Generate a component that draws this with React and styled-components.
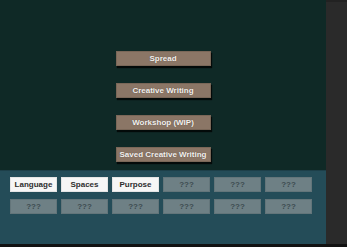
import React from "react";
import styled, { createGlobalStyle } from "styled-components";

const Global = createGlobalStyle`
  html, body { margin: 0; padding: 0; background: #111; }
  body { font-family: "Liberation Sans", Arial, sans-serif; }
`;

const Screen = styled.div`
  width: 347px;
  height: 247px;
  display: flex;
  flex-direction: column;
  overflow: hidden;
  background: #121212;
`;

const Body = styled.div`
  display: flex;
  height: 244px;
`;

const Main = styled.div`
  width: 326px;
  display: flex;
  flex-direction: column;
`;

const Sidebar = styled.div`
  flex: 1;
  background: #2a2a2a;
  border-top: 2px solid #222;
`;

const Stage = styled.div`
  height: 170px;
  box-sizing: border-box;
  background: #0f2926;
  display: flex;
  flex-direction: column;
  align-items: center;
  padding-top: 51px;
  gap: 17px;
`;

const MenuButton = styled.div`
  width: 95px;
  height: 15px;
  box-sizing: border-box;
  background: #8b7666;
  border: 1px solid #7a6758;
  box-shadow: 1px 2px 1px rgba(0, 0, 0, 0.75);
  color: #f4f1ee;
  font-size: 8px;
  font-weight: bold;
  display: flex;
  align-items: center;
  justify-content: center;
  text-shadow: 0 0 1px rgba(0, 0, 0, 0.4);
`;

const Panel = styled.div`
  flex: 1;
  background: #244c58;
  border-top: 1px solid #1d3f49;
  padding: 6px 10px 0;
  display: grid;
  grid-template-columns: repeat(6, 47px);
  grid-auto-rows: 15px;
  column-gap: 4px;
  row-gap: 7px;
  align-content: start;
`;

const Tag = styled.div`
  box-sizing: border-box;
  background: ${(p) => (p.$unlocked ? "#f6f6f6" : "#6e8085")};
  border: 1px solid ${(p) => (p.$unlocked ? "#e4e4e4" : "#63757a")};
  color: ${(p) => (p.$unlocked ? "#2e2e2e" : "#3c4b50")};
  font-size: 8px;
  font-weight: bold;
  display: flex;
  align-items: center;
  justify-content: center;
`;

const Footer = styled.div`
  height: 3px;
  background: #121212;
`;

const menu = ["Spread", "Creative Writing", "Workshop (WIP)", "Saved Creative Writing"];
const tags = ["Language", "Spaces", "Purpose", "???", "???", "???", "???", "???", "???", "???", "???", "???"];

export default function App() {
  return (
    <>
      <Global />
      <Screen>
        <Body>
          <Main>
            <Stage>
              {menu.map((m) => (
                <MenuButton key={m}>{m}</MenuButton>
              ))}
            </Stage>
            <Panel>
              {tags.map((t, i) => (
                <Tag key={i} $unlocked={t !== "???"}>{t}</Tag>
              ))}
            </Panel>
          </Main>
          <Sidebar />
        </Body>
        <Footer />
      </Screen>
    </>
  );
}
